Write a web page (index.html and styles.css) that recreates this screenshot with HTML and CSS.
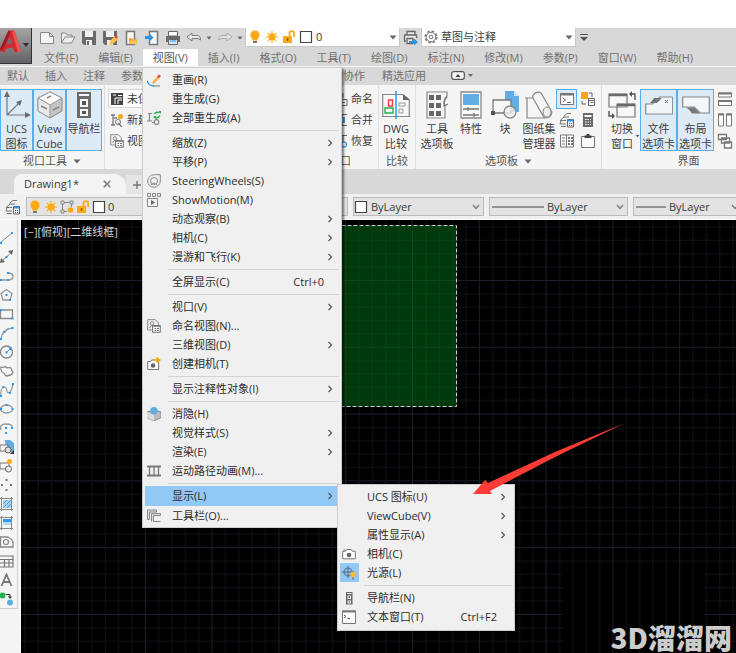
FILE: index.html
```html
<!DOCTYPE html>
<html lang="zh-CN">
<head>
<meta charset="utf-8">
<title>Drawing1</title>
<link rel="stylesheet" href="styles.css">
</head>
<body>
<svg class="defs" width="0" height="0" aria-hidden="true">
  <symbol id="chev" viewBox="0 0 6 8"><path d="M1.5 1l3 3-3 3" fill="none" stroke="#555" stroke-width="1.2"/></symbol>
  <symbol id="caret" viewBox="0 0 8 5"><path d="M0.500.5h7L4 4.500z" fill="#666"/></symbol>
  <symbol id="down" viewBox="0 0 8 6"><path d="M1 1l3 3.500L7 1" fill="none" stroke="#777" stroke-width="1.200"/></symbol>
  <symbol id="bulb" viewBox="0 0 14 16"><circle cx="7" cy="6" r="4.600" fill="#ffa914"/><path d="M4.500 9h5v2.500h-5z" fill="#ffa914"/><path d="M5 12h4v2H5z" fill="#777"/></symbol>
  <symbol id="sun" viewBox="0 0 14 14"><circle cx="7" cy="7" r="3.500" fill="#ffa914"/><path d="M7 1v12M1 7h12M2.800 2.800l8.400 8.400M11.200 2.800l-8.400 8.400" stroke="#ffa914" stroke-width="1.100"/></symbol>
  <symbol id="lock" viewBox="0 0 14 14"><path d="M1 6h9v7H1z" fill="#ffa914"/><path d="M7.500 6V3.500a2.300 2.300 0 0 1 4.600 0V7" fill="none" stroke="#ffa914" stroke-width="1.800"/><path d="M4.800 8h1.500v3H4.800z" fill="#8a5a00"/></symbol>
  <symbol id="box" viewBox="0 0 14 14"><path d="M1.500 1.500h11v11h-11z" fill="#fff" stroke="#444" stroke-width="1.200"/></symbol>
  <symbol id="camera" viewBox="0 0 14 14"><path d="M.7 4.200h3l1-1.700h4.500l1 1.700h3.100v7.600H.7z" fill="#fff" stroke="#777"/><circle cx="7" cy="8" r="2.300" fill="#666"/><path d="M1.500 3h2" stroke="#777"/></symbol>
  <symbol id="views" viewBox="0 0 14 14"><path d="M.7.700h7.600l3 3v3M5 11H.7V.700" fill="none" stroke="#888"/><circle cx="5" cy="4.500" r="1.700" fill="none" stroke="#888"/><path d="M2.500 9l2-2.500M5.500 6.500h7.800v6.800H5.500z" fill="#f4f4f4" stroke="#777"/><path d="M5.500 7.300h8M7.500 9.500h1.500M10 9.500h2M7.500 11.500h1.500M10 11.500h2" stroke="#777"/></symbol>
  <symbol id="sheets" viewBox="0 0 16 16"><path d="M1 12h6M1 8.500h6M1 12l1-3.500M1 8.500L5 5M4 5h6M5 4l3-2.500h4M2 14.500h5" fill="none" stroke="#777"/><path d="M8.500 7.500h6v7.500h-6z" fill="#eef4fa" stroke="#666"/><path d="M9 8.500h5" stroke="#2b9af3" stroke-width="2"/><path d="M10 11.500h1M12 11.500h1M10 13.500h1M12 13.500h1" stroke="#555"/></symbol>
</svg>
<div class="app">
  <header class="header">
    <button class="logo" aria-label="应用程序菜单"><svg width="32" height="36" viewBox="0 0 32 36"><path d="M0 21L8.500 2.500h6L21 24h-6.500l-1.500-4.500-7 1.200-1.500 3.800L0 23z" fill="#d32a2f"/><path d="M0 21L8.500 2.500l2 1L4 20l-4 3z" fill="#a5181d"/><path d="M9.500 9l-3 7.500 5.700-1.200z" fill="#6f6f71"/><path d="M14.500 2.500L21 24h-3L12 4z" fill="#ee5450"/><path d="M23 15h6l-3 4z" fill="#2c3038"/></svg></button>
    <div class="header-rows">
      <div class="quick">
        <button class="q" aria-label="新建"><svg width="16" height="14" viewBox="0 0 16 14"><path d="M1.500 1.500h9l4 4v7h-13zM10.500 1.500v4h4" fill="#f4f4f4" stroke="#888"/></svg></button>
        <button class="q" aria-label="打开"><svg width="16" height="14" viewBox="0 0 16 14"><path d="M1.500 12V2h4l1.500 2h5v2M1.500 12L5 6h10l-3.500 6z" fill="#eee" stroke="#888"/></svg></button>
        <button class="q" aria-label="保存"><svg width="16" height="16" viewBox="0 0 16 16"><path d="M1 1h14v14H3l-2-2z" fill="#6a6a6a"/><path d="M4 1h8v6H4zM5 10h6v5H5z" fill="#f1f1f1"/><path d="M6 11h2v4H6z" fill="#6a6a6a"/></svg></button>
        <button class="q" aria-label="另存为"><svg width="16" height="16" viewBox="0 0 16 16"><path d="M1 1h14v14H3l-2-2z" fill="#6a6a6a"/><path d="M4 1h8v6H4zM5 10h6v5H5z" fill="#f1f1f1"/><path d="M7 15l1-4 5-5 3 3-5 5z" fill="#ffc04c"/><path d="M12.500 6.500l1.500-1.500 2 2-1.500 2z" fill="#e6443c"/></svg></button>
        <button class="q" aria-label="从 Web 打开"><svg width="16" height="16" viewBox="0 0 16 16"><path d="M3.500 1.500h8v13h-8z" fill="#f8f8f8" stroke="#777" stroke-width="1.500"/><path d="M6 14V8h3l1 1.500h4V14z" fill="#f7a823"/><path d="M6 14l2-3.500h7L13 14z" fill="#ffc65a"/></svg></button>
        <button class="q" aria-label="保存到 Web"><svg width="16" height="16" viewBox="0 0 16 16"><path d="M5.500 1.500h8v13h-8z" fill="#f8f8f8" stroke="#777" stroke-width="1.500"/><path d="M1 6h4V3l4.500 4.500L5 12V9H1z" fill="#2196f3"/></svg></button>
        <button class="q" aria-label="打印"><svg width="16" height="16" viewBox="0 0 16 16"><path d="M3.500 1.500h9V6h-9z" fill="#fff" stroke="#666"/><path d="M1 6h14v6H1z" fill="#6a6a6a"/><path d="M3.500 9.500h9v5h-9z" fill="#cfe6fa" stroke="#666"/><path d="M5 11h6" stroke="#2196f3"/></svg></button>
        <button class="q" aria-label="放弃"><svg width="16" height="12" viewBox="0 0 16 12"><path d="M1 5l5-4v2.500h5q3.500 0 3.500 4.500Q13 6.500 11 6.500H6V9z" fill="#eee" stroke="#777"/></svg></button>
        <svg class="mini" viewBox="0 0 8 5"><use href="#caret"/></svg>
        <button class="q" aria-label="重做"><svg width="16" height="12" viewBox="0 0 16 12"><path d="M15 5l-5-4v2.500H5Q1.500 3.500 1.500 8 3 6.500 5 6.500h5V9z" fill="#e2e2e2" stroke="#aaa"/></svg></button>
        <svg class="mini" viewBox="0 0 8 5"><use href="#caret"/></svg>
        <button class="combo layer-combo" aria-label="图层"><svg width="14" height="16"><use href="#bulb"/></svg><svg width="14" height="14"><use href="#sun"/></svg><svg width="14" height="14"><use href="#lock"/></svg><svg width="14" height="14"><use href="#box"/></svg><span>0</span><svg class="end" width="8" height="5"><use href="#caret"/></svg></button>
        <button class="q" aria-label="批处理打印"><svg width="16" height="16" viewBox="0 0 16 16"><path d="M4 5V1.500h8V5M3 11H1.500V5h12v3M4 8.500h6v5H4z" fill="#e8e8e8" stroke="#666" stroke-width="1.300"/><path d="M6 11h5V8.500l4 3.500-4 3.500V13H6z" fill="#2196f3"/></svg></button>
        <div class="combo workspace"><svg width="14" height="14" viewBox="0 0 14 14"><circle cx="7" cy="7" r="5.800" fill="none" stroke="#777" stroke-width="1.500" stroke-dasharray="2.600 1.950"/><circle cx="7" cy="7" r="4.700" fill="#fff" stroke="#777"/><circle cx="7" cy="7" r="1.800" fill="none" stroke="#777"/></svg><select aria-label="工作空间"><option>草图与注释</option></select><svg class="end" width="8" height="5"><use href="#caret"/></svg></div>
        <svg class="more" width="8" height="8" viewBox="0 0 8 8"><path d="M0 .500h8" stroke="#555"/><path d="M0 3h8L4 7z" fill="#555"/></svg>
      </div>
      <nav class="menubar">
        <button>文件(F)</button><button>编辑(E)</button><button class="open">视图(V)</button><button>插入(I)</button><button>格式(O)</button><button>工具(T)</button><button>绘图(D)</button><button>标注(N)</button><button>修改(M)</button><button>参数(P)</button><button>窗口(W)</button><button>帮助(H)</button>
      </nav>
    </div>
  </header>

  <nav class="ribbon-tabs">
    <div class="tabs-left"><button>默认</button><button>插入</button><button>注释</button><button>参数</button></div>
    <button>协作</button><button>精选应用</button>
    <button class="ribbon-toggle" aria-label="最小化功能区"><svg width="22" height="9" viewBox="0 0 22 9"><rect x=".7" y=".7" width="12.600" height="7.600" rx="2" fill="#f6f6f6" stroke="#555" stroke-width="1.200"/><path d="M4.500 6L7 3l2.500 3z" fill="#444"/><path d="M17 3h5l-2.500 3z" fill="#666"/></svg></button>
  </nav>

  <section class="ribbon">
    <div class="panel p-tools">
      <div class="row">
        <button class="big on"><svg width="28" height="28" viewBox="0 0 28 28"><path d="M4 3v21h20M4 24L17 11" fill="none" stroke="#777" stroke-width="1.200"/><path d="M4 0l3 6H1zM28 24l-6-3v6zM19 9l-6 2 4 4z" fill="#6c6c6c"/></svg><span>UCS<br>图标</span></button>
        <button class="big on"><svg width="28" height="28" viewBox="0 0 28 28"><path d="M14 1l12 6v13l-12 7-12-7V7z" fill="#c4c4c4" stroke="#888"/><path d="M14 1l12 6-12 7L2 7z" fill="#fafafa" stroke="#999"/><path d="M2 7l12 7v13L2 20z" fill="#e9e9e9" stroke="#999"/><path d="M11 7l4-2M5 15l6 3M17 19l6-3" stroke="#888" stroke-width="1.500" fill="none"/></svg><span>View<br>Cube</span></button>
        <button class="big on"><svg width="28" height="28" viewBox="0 0 28 28"><path d="M7 1h14v26H7z" fill="#6a6a6a"/><path d="M9 3h10v2H9zM10 8h8v8h-8zM10 18h8v7h-8z" fill="#f5f5f5"/><path d="M12 10h4v4h-4zM12 20h4v3h-4z" fill="#555"/></svg><span>导航栏</span></button>
      </div>
      <div class="title">视口工具 <svg width="8" height="5"><use href="#caret"/></svg></div>
    </div>
    <div class="panel p-views">
      <div class="stack">
        <button class="view-combo"><svg width="14" height="14" viewBox="0 0 14 14"><path d="M1 1h12v12H1z" fill="#444"/><path d="M3 3h3M8 3.500h4M5 12V6h7M8 12V8h4" stroke="#fff" fill="none"/></svg>未保</button>
        <button><svg width="14" height="14" viewBox="0 0 14 14"><path d="M1 2h4M3 2v10M1 12h4M4 5h3M8 10l4 4" stroke="#777" fill="none" stroke-width="1.300"/><circle cx="8" cy="9" r="2.500" fill="none" stroke="#777"/><circle cx="10.500" cy="3.500" r="2.600" fill="#ffa914"/></svg>新建</button>
        <button><svg width="14" height="14"><use href="#views"/></svg>视图</button>
      </div>
    </div>
    <div class="panel p-viewport">
      <div class="stack end-stack">
        <button><svg width="14" height="14" viewBox="0 0 14 14"><path d="M2 3h7M9 1v5M5 7.500h8v6H5zM7 10.500h4" stroke="#666" fill="none"/></svg>命名</button>
        <button><svg width="14" height="14" viewBox="0 0 14 14"><path d="M2 1.500h11M8 2v10M2 12.500h11" stroke="#666" fill="none"/><path d="M10 4v6" stroke="#2b9af3" stroke-width="2"/></svg>合并</button>
        <button><svg width="14" height="14" viewBox="0 0 14 14"><path d="M2 1.500h11M9 2v6" stroke="#666" fill="none"/><circle cx="10" cy="10.500" r="2.500" fill="none" stroke="#2b9af3" stroke-width="1.200"/></svg>恢复</button>
      </div>
      <div class="title">模型视口</div>
    </div>
    <div class="panel p-compare">
      <div class="row">
        <button class="big"><svg width="28" height="28" viewBox="0 0 28 28"><path d="M.700 3.500h20L27.300 9v16.500H.700z" fill="#f8f8f8" stroke="#888" stroke-width="1.200"/><path d="M21 3v6h7z" fill="#666"/><path d="M6.500 9h4v6h-4z" fill="none" stroke="#f04040" stroke-width="1.400"/><path d="M3 17h8v5H3z" fill="none" stroke="#22b14c" stroke-width="1.400"/><path d="M17 12h6v3h-6zM17 18h4v4h-4z" fill="none" stroke="#999"/><path d="M14 0v28" stroke="#2b9af3" stroke-width="1.500"/></svg><span>DWG<br>比较</span></button>
      </div>
      <div class="title">比较</div>
    </div>
    <div class="panel p-palettes">
      <div class="row">
        <button class="big"><svg width="28" height="28" viewBox="0 0 28 28"><path d="M4 1h20v4q-4 4-2 9v13H4z" fill="#f6f6f6" stroke="#888" stroke-width="1.200"/><path d="M6 4h5v5H6zM13 4h5v5h-5zM6 12h5v5H6zM13 12h5v5h-5zM6 20h5v5H6zM13 20h5v5h-5z" fill="#666"/><path d="M24 6q-4 4-3 9l4-2" fill="none" stroke="#777" stroke-width="1.200"/></svg><span>工具<br>选项板</span></button>
        <button class="big"><svg width="28" height="28" viewBox="0 0 28 28"><path d="M4 1h20v26H4z" fill="#fafafa" stroke="#888" stroke-width="1.300"/><path d="M6 3h16v11H6z" fill="#62ade4"/><path d="M6 18h16M6 24h16M11 16v4M17 22v4" stroke="#777" stroke-width="1.300"/></svg><span>特性</span></button>
        <button class="big"><svg width="28" height="28" viewBox="0 0 28 28"><path d="M14 0h9l5 5v16H14z" fill="#62ade4"/><path d="M23 0v5h5z" fill="#d4e8f8"/><path d="M2 9h18v13H2z" fill="#f7f7f7" stroke="#777" stroke-width="1.300"/><circle cx="19" cy="21" r="6" fill="#eeeeee" fill-opacity=".8" stroke="#888" stroke-width="1.300"/><path d="M0 20h4v4H0z" fill="#555"/></svg><span>块</span></button>
        <button class="big"><svg width="28" height="28" viewBox="0 0 28 28"><path d="M0 7h9M2 7v20h18M9 3q3-3 7-1l11 19q-1 6-6 6-3-1-4-4L8 7q-1-2 1-4z" fill="#f6f6f6" stroke="#888" stroke-width="1.200"/><ellipse cx="22" cy="21" rx="4" ry="5" fill="#ececec" stroke="#888"/></svg><span>图纸集<br>管理器</span></button>
        <div class="smalls">
          <button class="s on" aria-label="命令行"><svg width="16" height="16" viewBox="0 0 16 16"><path d="M1.500 2.500h13v11h-13z" fill="#fff" stroke="#777"/><path d="M1 3.500h14" stroke="#777" stroke-width="2"/><path d="M3.500 6.500l3 2.500-3 2M8 11.500h4" fill="none" stroke="#666"/></svg></button>
          <button class="s" aria-label="参照"><svg width="16" height="16" viewBox="0 0 16 16"><path d="M1 1h7v7H1z" fill="#f9a51a"/><path d="M9 2h3v4M2 10v3h4" stroke="#666" fill="none"/><path d="M8.500 7.500h6v7h-6zM9 9.500h6M10.500 11.500h3" fill="#fff" stroke="#666"/></svg></button>
          <button class="s" aria-label="图层特性"><svg width="16" height="16"><use href="#sheets"/></svg></button>
          <button class="s" aria-label="计算器"><svg width="16" height="16" viewBox="0 0 16 16"><path d="M3 1h10v14H3z" fill="#6a6a6a"/><path d="M4.500 3h7v2h-7z" fill="#fff"/><path d="M5 7.500h6M5 10h6M5 12.500h6" stroke="#fff" stroke-dasharray="1.500 1"/></svg></button>
          <button class="s" aria-label="设计中心"><svg width="16" height="16" viewBox="0 0 16 16"><path d="M1.500 2h13v12h-13zM7.500 2v12" fill="#fff" stroke="#777"/><path d="M3 5h3M3 8h3M3 11h3" stroke="#777"/><path d="M9 5h5M9 8h5M9 11h5" stroke="#777" stroke-width="2" stroke-dasharray="2 1"/></svg></button>
          <button class="s" aria-label="剪贴板"><svg width="16" height="16" viewBox="0 0 16 16"><path d="M1.500 3.500h13v11h-13z" fill="#fafafa" stroke="#777"/><path d="M4.500 5V2.500h2V1h3v1.500h2V5z" fill="#444"/></svg></button>
        </div>
      </div>
      <div class="title">选项板 <svg width="8" height="5"><use href="#caret"/></svg></div>
    </div>
    <div class="panel p-ui">
      <div class="row">
        <button class="big"><svg width="28" height="28" viewBox="0 0 28 28"><path d="M1 3h18v13H1zM9 13h18v13H9z" fill="#f8f8f8" stroke="#777" stroke-width="1.200"/><path d="M1 4h18M9 14h18" stroke="#6a6a6a" stroke-width="2.500"/><path d="M22 3h5v6M1 20v5h5" fill="none" stroke="#555" stroke-width="1.400"/><path d="M21 3l3-3v6zM7 25l-3-3v6z" fill="#555"/></svg><span>切换<br>窗口</span></button>
        <svg class="switch-caret" width="5" height="4" viewBox="0 0 8 5"><use href="#caret"/></svg>
        <button class="big on wide"><svg width="28" height="28" viewBox="0 0 28 28"><path d="M.700 23V13h7l7-7h13v17z" fill="#f3f6f9" stroke="#888" stroke-width="1.200"/><path d="M5 12h7l5-5H9q-2 3-4 5z" fill="#777"/><path d="M20 9l3 3M23 9l-3 3" stroke="#666"/></svg><span>文件<br>选项卡</span></button>
        <button class="big on wide"><svg width="28" height="28" viewBox="0 0 28 28"><path d="M.700 6h26.600v16h-9l-6-6H.700z" fill="#f3f6f9" stroke="#888" stroke-width="1.200"/><path d="M4 16.500h8l6 6h-8q-2-4-6-6z" fill="#777"/></svg><span>布局<br>选项卡</span></button>
        <div class="smalls one">
          <button class="s" aria-label="水平平铺"><svg width="16" height="16" viewBox="0 0 16 16"><path d="M1.500 2h13v4h-13zM1.500 9.500h13v5h-13z" fill="#fff" stroke="#777"/><path d="M1 2.500h14M1 10h14" stroke="#777" stroke-width="2"/></svg></button>
          <button class="s" aria-label="垂直平铺"><svg width="16" height="16" viewBox="0 0 16 16"><path d="M1.500 2h5v12h-5zM9.500 2h5v12h-5z" fill="#fff" stroke="#777"/><path d="M1 2.500h6M9 2.500h6" stroke="#777" stroke-width="2"/></svg></button>
          <button class="s" aria-label="层叠"><svg width="16" height="16" viewBox="0 0 16 16"><path d="M1.500 1.500h8v5h-8zM4.500 5h8v5h-8zM7.500 9h7v6h-7z" fill="#fff" stroke="#777" stroke-width="1.300"/></svg></button>
        </div>
      </div>
      <div class="title">界面</div>
    </div>
  </section>

  <div class="files">
    <div class="file-tab"><span>Drawing1*</span><button aria-label="关闭"><svg width="8" height="8" viewBox="0 0 8 8"><path d="M.700.700l6.600 6.600M7.300.700L.700 7.300" stroke="#777" stroke-width="1.400"/></svg></button></div>
    <button class="new-tab" aria-label="新图形"><svg width="8" height="8" viewBox="0 0 8 8"><path d="M4 0v8M0 4h8" stroke="#777" stroke-width="1.400"/></svg></button>
  </div>

  <div class="props">
    <svg class="layers" width="16" height="16"><use href="#sheets"/></svg>
    <button class="pc layer-pc" aria-label="图层控制"><svg width="14" height="16"><use href="#bulb"/></svg><svg width="14" height="14"><use href="#sun"/></svg><svg width="14" height="14" viewBox="0 0 14 14"><path d="M1 1h3v3H1zM10 1h3v3h-3zM1 10h3v3H1zM4 2.500h6M2.500 4v6M11.500 4v3M4 11.500h3" fill="none" stroke="#888"/><circle cx="10.500" cy="10" r="2.800" fill="#ffa914"/></svg><svg width="14" height="14"><use href="#lock"/></svg><svg width="14" height="14"><use href="#box"/></svg><span>0</span></button>
    <div class="pc color-pc"><svg width="14" height="14"><use href="#box"/></svg><select aria-label="颜色"><option>ByLayer</option></select><svg width="8" height="6"><use href="#down"/></svg></div>
    <div class="pc line-pc"><svg width="52" height="2"><path d="M0 1h52" stroke="#444"/></svg><select aria-label="线型"><option>ByLayer</option></select><svg width="8" height="6"><use href="#down"/></svg></div>
    <div class="pc weight-pc"><svg width="30" height="2"><path d="M0 1h30" stroke="#444"/></svg><select aria-label="线宽"><option>ByLayer</option></select><svg width="8" height="6"><use href="#down"/></svg></div>
  </div>

  <main class="work">
    <div class="tools">
      <button aria-label="直线"><svg viewBox="0 0 14 14"><path d="M0 12L12 2" stroke="#888"/><path d="M0 11h2v2H0zM11 1h2v2h-2z" fill="#2b9af3"/></svg></button>
      <button aria-label="构造线"><svg viewBox="0 0 14 14"><path d="M1 12L12 2" stroke="#888"/><path d="M13 0l-1 5-4-4zM0 13l1-5 4 4z" fill="#666"/><path d="M5.500 6h2v2h-2z" fill="#2b9af3"/></svg></button>
      <button aria-label="多段线"><svg viewBox="0 0 14 14"><path d="M0 11h8q5 0 5-3.500T8 4" fill="none" stroke="#999" stroke-width="1.400"/><path d="M0 10h2v2H0zM7 10h2v2H7zM7 3h2v2H7z" fill="#2b9af3"/></svg></button>
      <button aria-label="多边形"><svg viewBox="0 0 14 14"><path d="M6.500 1.500L12 5.500 10 12H3L1 5.500z" fill="none" stroke="#999" stroke-width="1.300"/><path d="M5.500 6h2v2h-2zM9 11h2v2H9z" fill="#2b9af3"/></svg></button>
      <button aria-label="矩形"><svg viewBox="0 0 14 14"><path d="M.500 3h12v8.500H.500z" fill="none" stroke="#888" stroke-width="1.300"/><path d="M0 2h2v2H0zM11.500 10.500h2v2h-2z" fill="#2b9af3"/></svg></button>
      <button aria-label="圆弧"><svg viewBox="0 0 14 14"><path d="M1 13Q2 3 13 2" fill="none" stroke="#999" stroke-width="1.300"/><path d="M0 12h2v2H0zM3.500 5h2v2h-2zM11.500 1h2v2h-2z" fill="#2b9af3"/></svg></button>
      <button aria-label="圆"><svg viewBox="0 0 14 14"><circle cx="6.500" cy="7" r="6" fill="none" stroke="#888" stroke-width="1.300"/><path d="M6 8l4-4" stroke="#2b9af3"/><path d="M5.500 6.500h2v2h-2zM9 2.500h2.500V5H9z" fill="#2b9af3"/></svg></button>
      <button aria-label="修订云线"><svg viewBox="0 0 14 14"><path d="M2 8Q0 4 1 3q3 1 4-.5 2 2 4 1 3 0 2.500 2.500Q14 8 12 10q-2 2-3 1-2 2-4 0 0-2-3-3z" fill="none" stroke="#888" stroke-width="1.200"/></svg></button>
      <button aria-label="样条曲线"><svg viewBox="0 0 14 14"><path d="M.500 13Q1 4 4 4t3 5q4 3 6-8" fill="none" stroke="#999" stroke-width="1.200"/><path d="M0 12h2v2H0zM2.500 3h2v2h-2zM9 9h2v2H9zM12 0h2v2h-2z" fill="#2b9af3"/></svg></button>
      <button aria-label="椭圆"><svg viewBox="0 0 14 14"><ellipse cx="6.500" cy="7" rx="6" ry="4" fill="none" stroke="#999" stroke-width="1.300"/><path d="M0 6h2v2H0zM5.500 2h2v2h-2zM11.500 6h2v2h-2z" fill="#2b9af3"/></svg></button>
      <button aria-label="椭圆弧"><svg viewBox="0 0 14 14"><path d="M1 9Q-1 3 6 3t6 4" fill="none" stroke="#999" stroke-width="1.300"/><path d="M5 6h2v2H5zM11 6h2v2h-2zM5 11h2v2H5z" fill="#2b9af3"/></svg></button>
      <button aria-label="插入块"><svg viewBox="0 0 14 14"><path d="M5 0h5l4 3v9H6z" fill="#62ade4"/><path d="M0 5h8v6H0z" fill="#f4f4f4" stroke="#777"/><circle cx="8" cy="10" r="3" fill="#ddd" stroke="#666"/><path d="M14 10v4h-4z" fill="#333"/></svg></button>
      <button aria-label="创建块"><svg viewBox="0 0 14 14"><path d="M0 4h9v6H0z" fill="none" stroke="#777"/><circle cx="8.500" cy="10" r="3" fill="#eee" stroke="#666"/><circle cx="9.500" cy="2.500" r="2.500" fill="#ffa914"/></svg></button>
      <button aria-label="点"><svg viewBox="0 0 14 14"><path d="M5.500 1h2v2h-2zM1 6h2v2H1zM10 6h2v2h-2zM5.500 11h2v2h-2z" fill="#777"/></svg></button>
      <button aria-label="图案填充"><svg viewBox="0 0 14 14"><path d="M3 3h8v8H3z" fill="#a7d2f5"/><path d="M3 7l4-4M3 11l8-8M7 11l4-4" stroke="#4ba3e8"/><path d="M0 1.500h13M0 12.500h13M1.500 0v14M11.500 0v14" stroke="#888"/></svg></button>
      <button aria-label="渐变色"><svg viewBox="0 0 14 14"><path d="M3 3h8v3H3z" fill="#2b9af3"/><path d="M3 6h8v3H3z" fill="#b6daf7"/><path d="M0 1.500h13M0 12.500h13M1.500 0v14M11.500 0v14" stroke="#888"/></svg></button>
      <button aria-label="面域"><svg viewBox="0 0 14 14"><path d="M.500 2H8q4 2 5 5v5H.500z" fill="none" stroke="#888" stroke-width="1.300"/><circle cx="6" cy="7" r="2.500" fill="none" stroke="#888" stroke-width="1.200"/></svg></button>
      <button aria-label="表格"><svg viewBox="0 0 14 14"><path d="M0 2h13v11H0M0 5.500h13M0 9h13M4.500 5v8M9 5v8" fill="none" stroke="#777" stroke-width="1.200"/></svg></button>
      <button aria-label="多行文字"><svg viewBox="0 0 14 14"><path d="M1.500 13L6.500 1.500 11.500 13M3.500 9h6" fill="none" stroke="#777" stroke-width="1.800"/></svg></button>
      <button aria-label="添加选定对象"><svg viewBox="0 0 14 14"><circle cx="2.500" cy="3.500" r="3" fill="#22b14c"/><circle cx="10" cy="10.500" r="3" fill="#62ade4"/><path d="M6 2.500h4V5" fill="none" stroke="#333"/><path d="M8 4.500h4l-2 2.500z" fill="#333"/></svg></button>
    </div>
    <div class="canvas">
      <svg class="grid" width="100%" height="100%" aria-hidden="true">
        <defs>
          <pattern id="rows" x="0" y="60" width="66.800" height="66.800" patternUnits="userSpaceOnUse"><path d="M0 .500h67" stroke="#1d1f2c"/><path d="M0 13.900h67M0 27.200h67M0 40.600h67M0 53.900h67" stroke="#101318"/></pattern>
          <pattern id="cols" x="57" y="0" width="66.800" height="66.800" patternUnits="userSpaceOnUse"><path d="M.500 0v67" stroke="#1d1f2c"/><path d="M13.900 0v67M27.200 0v67M40.600 0v67M53.900 0v67" stroke="#101318"/></pattern>
        </defs>
        <rect width="100%" height="100%" fill="#000"/>
        <rect width="100%" height="100%" fill="url(#rows)"/>
        <rect x="542" y="343" width="141" height="100" fill="#000"/>
        <rect width="100%" height="100%" fill="url(#cols)"/>
        <rect x="200.500" y="5.500" width="235" height="181" fill="#006414" fill-opacity=".58" stroke="#ccc" stroke-dasharray="4 2"/>
      </svg>
      <span class="viewport-label">[−][俯视][二维线框]</span>
      <span class="watermark">3D溜溜网</span>
    </div>
  </main>

  <div class="menu view-menu" role="menu">
    <button class="item"><svg viewBox="0 0 14 14"><path d="M0 8q2 5 7 5" fill="none" stroke="#2b9af3" stroke-width="1.300"/><path d="M5 11l1-3 4-4.500 2 2L8 10z" fill="#f7b253"/><path d="M10 3.500l2-2L14 3l-2 2.500z" fill="#e6443c"/><path d="M6 13h7" stroke="#777"/></svg>重画(R)</button>
    <button class="item">重生成(G)</button>
    <button class="item"><svg viewBox="0 0 14 14"><path d="M1 2.500h4M2.500 3v7M0 10h5M5 11.500h2" fill="none" stroke="#888" stroke-width="1.200"/><circle cx="9.500" cy="11" r="2.300" fill="none" stroke="#888" stroke-width="1.200"/><path d="M7.500 3q2-3 5-1M13 4.500q-2 3.500-5 2" fill="none" stroke="#22b14c" stroke-width="1.400"/><path d="M11.500 0h2.500v3zM6.500 5h3L7 7.500z" fill="#22b14c"/></svg>全部重生成(A)</button>
    <hr>
    <button class="item">缩放(Z)<svg class="arr"><use href="#chev"/></svg></button>
    <button class="item">平移(P)<svg class="arr"><use href="#chev"/></svg></button>
    <button class="item"><svg viewBox="0 0 14 14"><path d="M7 .700h6.300V7A6.300 6.300 0 1 1 7 .700z" fill="none" stroke="#888"/><circle cx="7" cy="7" r="3.500" fill="none" stroke="#888"/><path d="M4 11q3-4 6 0" fill="none" stroke="#888"/></svg>SteeringWheels(S)</button>
    <button class="item"><svg viewBox="0 0 14 14"><path d="M.500.500h3v3h-3zM5.500.500h3v3h-3zM10.500.500h3v3h-3zM.500 5.500h10v8H.500z" fill="none" stroke="#888"/><path d="M4 7l4 2.500L4 12z" fill="#666"/></svg>ShowMotion(M)</button>
    <button class="item">动态观察(B)<svg class="arr"><use href="#chev"/></svg></button>
    <button class="item">相机(C)<svg class="arr"><use href="#chev"/></svg></button>
    <button class="item">漫游和飞行(K)<svg class="arr"><use href="#chev"/></svg></button>
    <hr>
    <button class="item">全屏显示(C)<kbd>Ctrl+0</kbd></button>
    <hr>
    <button class="item">视口(V)<svg class="arr"><use href="#chev"/></svg></button>
    <button class="item"><svg><use href="#views"/></svg>命名视图(N)...</button>
    <button class="item">三维视图(D)<svg class="arr"><use href="#chev"/></svg></button>
    <button class="item"><svg viewBox="0 0 14 14"><path d="M.700 4.500h3l1-1.500h4l1 1.500h2v8H.700z" fill="#fff" stroke="#777"/><circle cx="6" cy="8.500" r="2.300" fill="#666"/><path d="M10.500 0l1 2 2 1-2 1-1 2-1-2-2-1 2-1z" fill="#ffa914" stroke="#ffa914"/></svg>创建相机(T)</button>
    <hr>
    <button class="item">显示注释性对象(I)<svg class="arr"><use href="#chev"/></svg></button>
    <hr>
    <button class="item"><svg viewBox="0 0 14 14"><path d="M0 5l7-2 7 2v5.500L7 14l-7-3.500z" fill="#bdbdbd" stroke="#888"/><path d="M0 5l7 3v6l-7-3.500z" fill="#ddd"/><circle cx="7" cy="3.700" r="3.700" fill="#62ade4"/></svg>消隐(H)</button>
    <button class="item">视觉样式(S)<svg class="arr"><use href="#chev"/></svg></button>
    <button class="item">渲染(E)<svg class="arr"><use href="#chev"/></svg></button>
    <button class="item"><svg viewBox="0 0 14 14"><path d="M0 2.500h14M0 11.500h14" stroke="#777" stroke-width="2"/><path d="M2.500 2v10M7 2v10M11.500 2v10" stroke="#777" stroke-width="1.300"/></svg>运动路径动画(M)...</button>
    <hr>
    <div class="anchor">
      <button class="item selected">显示(L)<svg class="arr"><use href="#chev"/></svg></button>
      <div class="menu sub-menu" role="menu">
        <button class="item">UCS 图标(U)<svg class="arr"><use href="#chev"/></svg></button>
        <button class="item">ViewCube(V)<svg class="arr"><use href="#chev"/></svg></button>
        <button class="item">属性显示(A)<svg class="arr"><use href="#chev"/></svg></button>
        <button class="item"><svg><use href="#camera"/></svg>相机(C)</button>
        <button class="item checked"><svg viewBox="0 0 14 14"><circle cx="6" cy="6" r="3.800" fill="none" stroke="#5c7d9b" stroke-width="1.300"/><path d="M6 0v12M0 6h12" stroke="#5c7d9b" stroke-width="1.300"/><circle cx="11" cy="8.500" r="2.800" fill="#f9b733"/><path d="M10 11.500h2v2h-2z" fill="#888"/></svg>光源(L)</button>
        <hr>
        <button class="item"><svg viewBox="0 0 14 14"><path d="M4 1h6.500v12.500H4z" fill="#666"/><path d="M5 2h4.500v1H5zM5.500 4.500h3.500V8H5.500zM5.500 9.500h3.500v3H5.500z" fill="#fff"/><path d="M6.500 5.500H8V7H6.500zM6.500 10.500H8v1H6.500z" fill="#444"/></svg>导航栏(N)</button>
        <button class="item"><svg viewBox="0 0 14 14"><path d="M.500 1h13v12.500H.500z" fill="#fff" stroke="#777"/><path d="M0 1.500h14" stroke="#777" stroke-width="2"/><path d="M2 5l2 1.500L2 8M5.500 8.500H8" fill="none" stroke="#555"/></svg>文本窗口(T)<kbd>Ctrl+F2</kbd></button>
      </div>
    </div>
    <button class="item"><svg viewBox="0 0 14 14"><path d="M.500 10.500V1h9v2h-7v7.500zM4.500 12.500v-8h9v2h-7v6h7" fill="#ddd" stroke="#888"/></svg>工具栏(O)...</button>
  </div>

  <svg class="pointer" width="152" height="72" viewBox="0 0 152 72" aria-hidden="true"><path d="M0 71L12 57l3 3L82 29 152 0 84 33 17 68l2 3z" fill="#ff3b36"/></svg>
</div>
</body>
</html>
```
FILE: styles.css
```css
* { box-sizing: border-box; }
body {
  margin: 0;
  background: #fff;
  color: #3c3c3c;
  font: 11px/16px "Open Sans", "Noto Sans CJK SC", sans-serif;
}
button, select, kbd { font: inherit; color: inherit; }
button { border: 0; padding: 0; background: none; white-space: nowrap; }
select { border: 0; padding: 0; background: none; appearance: none; flex: 1; min-width: 0; }
svg { flex: none; }
.defs { position: absolute; }

.app {
  position: relative;
  display: flex;
  flex-direction: column;
  min-height: 100vh;
  padding-top: 28px;
  overflow: hidden;
}

/* title bar */
.header { display: flex; height: 38px; background: #d8d8d8; }
.logo {
  width: 32px;
  height: 36px;
  background: linear-gradient(#a4a4a4, #626264);
  box-shadow: inset -1px -1px #333;
}
.logo svg { display: block; }
.header-rows { flex: 1; min-width: 0; }
.quick { display: flex; align-items: center; height: 19px; padding-left: 4px; }
.q { display: flex; justify-content: center; width: 21px; flex: none; }
.mini { width: 6px; height: 4px; margin: 0 2px; }
.combo {
  display: flex;
  align-items: center;
  gap: 3px;
  height: 19px;
  padding: 0 2px;
  background: #fff;
  border: 1px solid #c8c8c8;
  border-top: 0;
}
.combo .end { margin-left: auto; }
.layer-combo { width: 155px; }
.workspace { width: 155px; }
.more { margin-left: 4px; }
.menubar { display: flex; height: 19px; padding: 2px 0 0 2px; color: #707070; }
.menubar button { padding: 0 10px; }
.menubar .open { background: #fff; color: #555; }

/* ribbon */
.ribbon-tabs {
  display: flex;
  align-items: center;
  gap: 17px;
  height: 19px;
  background: #d8d8d8;
  border-top: 1px solid #f4f4f4;
  color: #707070;
}
.tabs-left { display: flex; gap: 16px; width: 326px; padding-left: 7px; }
.ribbon-toggle { margin-left: 8px; }
.ribbon { display: flex; height: 84px; background: #f5f5f5; overflow: hidden; }
.panel {
  display: flex;
  flex: none;
  flex-direction: column;
  justify-content: space-between;
  padding-top: 4px;
  border-right: 1px solid #dedede;
}
.row { display: flex; }
.title { display: flex; align-items: center; justify-content: center; gap: 6px; height: 16px; color: #555; }
.big {
  display: flex;
  flex-direction: column;
  align-items: center;
  gap: 2px;
  width: 34px;
  height: 62px;
  padding-top: 1px;
  border: 1px solid transparent;
  line-height: 15px;
}
.on { background: #dcebf6; border-color: #55aef0; }
.p-tools .big { width: 33px; }
.p-tools .big:last-child { width: 36px; }
.big.wide { width: 37px; }
.p-tools { width: 105px; }
.p-views { width: 175px; padding-left: 3px; }
.p-viewport { width: 99px; }
.p-compare { width: 37px; }
.p-palettes { width: 186px; }
.p-palettes .row { padding-left: 4px; }
.p-ui { width: 174px; }
.p-ui .row { padding-left: 3px; }
.stack { display: flex; flex-direction: column; gap: 2px; width: 90px; }
.stack button { display: flex; align-items: center; gap: 3px; height: 19px; padding-left: 2px; }
.stack .view-combo { padding-left: 1px; background: #fff; border: 1px solid #d4d4d4; }
.end-stack { align-self: flex-end; width: 46px; }
.smalls { display: grid; grid-template-columns: 21px 21px; grid-auto-rows: 21px; }
.s { display: flex; align-items: center; justify-content: center; border: 1px solid transparent; height: 20px; }
.s.on { border-color: #55aef0; }
.smalls.one { grid-template-columns: 21px; }
.switch-caret { align-self: center; margin: 30px 0 0 -4px; }

/* drawing tabs */
.files { display: flex; align-items: flex-end; height: 25px; padding-left: 14px; background: #d8d8d8; }
.file-tab {
  display: flex;
  align-items: center;
  justify-content: space-between;
  width: 112px;
  height: 20px;
  padding: 0 15px 0 10px;
  background: #f4f4f4;
  border-radius: 8px 12px 0 0;
}
.file-tab button { display: flex; }
.new-tab { width: 30px; height: 19px; padding-left: 7px; text-align: left; background: #e6e6e6; }

/* property bar */
.props {
  display: flex;
  align-items: center;
  gap: 5px;
  height: 26px;
  padding-left: 5px;
  background: #f0f0f0;
  border-bottom: 1px solid #fafafa;
  overflow: hidden;
}
.pc {
  display: flex;
  flex: none;
  align-items: center;
  gap: 3px;
  height: 19px;
  padding: 0 3px 0 2px;
  background: #e3e3e3;
  border: 1px solid #bbb;
}
.layer-pc { gap: 2px; width: 322px; padding-left: 1px; }
.color-pc { width: 131px; padding-left: 0; }
.line-pc { width: 139px; }
.weight-pc { width: 110px; }

/* workspace */
.work { display: flex; flex: 1; background: #f5f5f5; }
.tools {
  display: flex;
  flex-direction: column;
  align-self: flex-start;
  width: 18px;
  margin-right: 3px;
  padding-top: 8px;
  border: solid #ccc;
  border-width: 0 1px 1px 0;
}
.tools button { display: flex; height: 19px; align-items: center; }
.tools svg { width: 14px; height: 14px; }
.canvas { position: relative; flex: 1; min-width: 0; background: #000; overflow: hidden; }
.grid { position: absolute; inset: 0; }
.viewport-label { position: absolute; left: 3px; top: 4px; color: #d8d8d8; }
.watermark {
  position: absolute;
  right: 4px;
  bottom: -6px;
  color: #ccc;
  font-family: "Noto Sans CJK SC", sans-serif;
  font-size: 28px;
  line-height: 44px;
  font-weight: 900;
}

/* menus */
.menu {
  position: absolute;
  display: flex;
  flex-direction: column;
  padding: 2px;
  background: #f0f0f0;
  border: 1px solid #ccc;
  color: #2c2c2c;
}
.view-menu { left: 142px; top: 67px; width: 200px; box-shadow: 2px 2px 2px rgba(0, 0, 0, .5); }
.item {
  position: relative;
  display: flex;
  align-items: center;
  width: 100%;
  height: 19px;
  padding: 0 6px 0 27px;
  text-align: left;
}
.item > svg:not(.arr) { width: 14px; height: 14px; margin: 0 11px 0 -25px; }
.item .arr { width: 6px; height: 8px; margin-left: auto; }
.item kbd { margin-left: auto; padding-right: 9px; }
.menu hr { height: 1px; width: 171px; margin: 3px 0 2px auto; border: 0; background: #d4d4d4; }
.anchor { position: relative; }
.selected { background: #91c8f6; height: 20px; }
.sub-menu { left: 192px; top: -2px; width: 178px; padding-bottom: 4px; }
.sub-menu hr { width: 148px; }
.checked { background: linear-gradient(90deg, #91c8f6 19px, transparent 19px); }

.pointer { position: absolute; left: 473px; top: 423px; }
```
